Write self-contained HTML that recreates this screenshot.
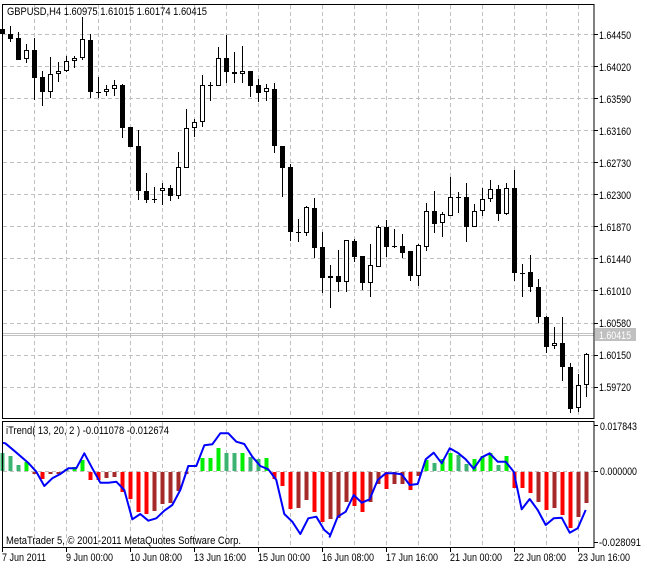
<!DOCTYPE html>
<html><head><meta charset="utf-8"><style>
html,body{margin:0;padding:0;background:#fff;}
svg{display:block;font-family:"Liberation Sans",sans-serif;font-size:11px;}
</style></head><body>
<svg id="s" width="647" height="569" xmlns="http://www.w3.org/2000/svg">
<rect x="0" y="0" width="647" height="569" fill="#fff"/>
<g id="grid" stroke="#c0c0c0" stroke-width="1" stroke-dasharray="4,3"></g>
<line x1="2" y1="333.5" x2="594" y2="333.5" stroke="#c0c0c0"/>
<line x1="2" y1="335.5" x2="594" y2="335.5" stroke="#c0c0c0"/>
<g id="hist"></g>
<g id="candles"></g>
<polyline id="blue" fill="none" stroke="#0000ff" stroke-width="2" stroke-linejoin="round"/>
<rect x="2.5" y="4.5" width="591.5" height="414" fill="none" stroke="#000"/>
<rect x="2.5" y="421.5" width="591.5" height="126" fill="none" stroke="#000"/>
<g id="ticks" stroke="#000"></g>
<g lengthAdjust="spacingAndGlyphs">
<text x="7" y="15" textLength="200" lengthAdjust="spacingAndGlyphs">GBPUSD,H4  1.60975 1.61015 1.60174 1.60415</text>
<text x="6" y="434" textLength="163" lengthAdjust="spacingAndGlyphs">iTrend( 13, 20, 2 ) -0.011078 -0.012674</text>
<text x="6" y="544" textLength="235" lengthAdjust="spacingAndGlyphs">MetaTrader 5, © 2001-2011 MetaQuotes Software Corp.</text>
</g>
<g fill="#000" id="plabels">
<text x="599" y="39" textLength="32" lengthAdjust="spacingAndGlyphs">1.64450</text>
<text x="599" y="71" textLength="32" lengthAdjust="spacingAndGlyphs">1.64020</text>
<text x="599" y="103" textLength="32" lengthAdjust="spacingAndGlyphs">1.63590</text>
<text x="599" y="135" textLength="32" lengthAdjust="spacingAndGlyphs">1.63160</text>
<text x="599" y="167" textLength="32" lengthAdjust="spacingAndGlyphs">1.62730</text>
<text x="599" y="199" textLength="32" lengthAdjust="spacingAndGlyphs">1.62300</text>
<text x="599" y="231" textLength="32" lengthAdjust="spacingAndGlyphs">1.61870</text>
<text x="599" y="263" textLength="32" lengthAdjust="spacingAndGlyphs">1.61440</text>
<text x="599" y="295" textLength="32" lengthAdjust="spacingAndGlyphs">1.61010</text>
<text x="599" y="327" textLength="32" lengthAdjust="spacingAndGlyphs">1.60580</text>
<text x="599" y="359" textLength="32" lengthAdjust="spacingAndGlyphs">1.60150</text>
<text x="599" y="391" textLength="32" lengthAdjust="spacingAndGlyphs">1.59720</text>
<text x="600" y="430" textLength="37" lengthAdjust="spacingAndGlyphs">0.017843</text>
<text x="600" y="475" textLength="37" lengthAdjust="spacingAndGlyphs">0.000000</text>
<text x="599" y="546" textLength="42" lengthAdjust="spacingAndGlyphs">-0.028091</text>
</g>
<rect x="595" y="328" width="41" height="13" fill="#c0c0c0"/>
<text x="599" y="339" fill="#fff" textLength="32" lengthAdjust="spacingAndGlyphs">1.60415</text>
<g fill="#000">
<text x="2" y="561" textLength="44" lengthAdjust="spacingAndGlyphs">7 Jun 2011</text>
<text x="66" y="561" textLength="47" lengthAdjust="spacingAndGlyphs">9 Jun 00:00</text>
<text x="130" y="561" textLength="52" lengthAdjust="spacingAndGlyphs">10 Jun 08:00</text>
<text x="194" y="561" textLength="52" lengthAdjust="spacingAndGlyphs">13 Jun 16:00</text>
<text x="258" y="561" textLength="52" lengthAdjust="spacingAndGlyphs">15 Jun 00:00</text>
<text x="322" y="561" textLength="52" lengthAdjust="spacingAndGlyphs">16 Jun 08:00</text>
<text x="386" y="561" textLength="52" lengthAdjust="spacingAndGlyphs">17 Jun 16:00</text>
<text x="450" y="561" textLength="52" lengthAdjust="spacingAndGlyphs">21 Jun 00:00</text>
<text x="514" y="561" textLength="52" lengthAdjust="spacingAndGlyphs">22 Jun 08:00</text>
<text x="578" y="561" textLength="52" lengthAdjust="spacingAndGlyphs">23 Jun 16:00</text>
</g>
</svg>
<script>
var NS="http://www.w3.org/2000/svg";
function el(p,t,a){var e=document.createElementNS(NS,t);for(var k in a)e.setAttribute(k,a[k]);p.appendChild(e);return e;}
var grid=document.getElementById('grid'),ticks=document.getElementById('ticks');
var hy=[34.5,66.5,98.5,130.5,162.5,194.5,226.5,258.5,290.5,323.5,355.5,387.5];
hy.forEach(function(y){el(grid,'line',{x1:3,y1:y,x2:594,y2:y});el(ticks,'line',{x1:594,y1:y,x2:598,y2:y});});
for(var x=34.5;x<594;x+=32){el(grid,'line',{x1:x,y1:5,x2:x,y2:418});el(grid,'line',{x1:x,y1:422,x2:x,y2:547});}
el(grid,'line',{x1:3,y1:471.5,x2:594,y2:471.5});
[425.5,471.5,542.5].forEach(function(y){el(ticks,'line',{x1:594,y1:y,x2:598,y2:y});});
for(var x=2.5;x<594;x+=64){el(ticks,'line',{x1:x,y1:548,x2:x,y2:552});}
var C=[
['b',29,34,26,36],['b',34,39,26,42],['b',38,60,32,60],['w',50,59,44,63],['b',50,78,38,100],['b',77,92,71,106],['w',74,92,57,98],['w',71,74,62,82],['w',61,71,56,72],['w',58,61,56,68],
['w',39,58,17,60],['b',40,92,34,98],['d',92,93,77,98],['w',89,92,85,96],['w',85,89,80,96],['b',85,128,84,138],['b',127,147,127,147],['b',146,191,130,200],['b',191,200,173,203],['d',199,200,187,203],
['w',188,191,183,205],['b',188,196,185,201],['w',167,196,152,199],['w',128,168,109,168],['w',122,128,119,137],['w',85,122,75,127],['d',85,86,82,101],['w',58,86,47,86],['b',58,72,35,83],['b',72,74,52,83],
['w',71,74,46,83],['b',71,86,71,97],['b',85,93,79,102],['w',88,92,84,101],['b',89,146,83,153],['b',146,168,146,197],['b',167,232,164,241],['d',232,233,219,242],['w',207,233,206,236],['b',208,248,198,258],
['b',247,278,232,293],['w',276,278,265,308],['b',276,282,250,292],['w',240,282,240,292],['b',241,257,239,262],['b',256,283,256,290],['w',265,283,244,297],['w',227,267,225,267],['b',227,247,220,257],['d',246,247,229,248],
['b',246,253,234,258],['b',251,276,251,281],['w',245,276,244,286],['w',211,247,203,251],['b',211,224,191,233],['w',214,223,212,237],['w',197,216,177,216],['d',197,198,192,213],['b',197,227,183,242],['w',211,227,204,227],
['w',199,211,188,216],['w',189,199,180,202],['b',189,214,185,221],['w',188,214,183,215],['b',188,273,170,281],['d',273,274,264,297],['b',272,287,255,292],['b',287,317,279,323],['b',317,347,316,353],['w',343,346,327,349],
['b',343,367,317,381],['b',367,409,363,413],['w',385,408,374,412],['w',354,385,353,397]];
var cg=document.getElementById('candles');
C.forEach(function(c,i){var cx=2.5+8*i;
 el(cg,'line',{x1:cx,y1:c[3],x2:cx,y2:c[4],stroke:'#000'});
 if(c[0]=='b'){el(cg,'rect',{x:cx-2.5,y:c[1],width:5,height:Math.max(1,c[2]-c[1]),fill:'#000'});}
 else if(c[0]=='w'){el(cg,'rect',{x:cx-2,y:c[1]+0.5,width:4,height:Math.max(1,c[2]-c[1]-1),fill:'#fff',stroke:'#000'});}
 else {el(cg,'line',{x1:cx-2.5,y1:c[1]+0.5,x2:cx+2.5,y2:c[1]+0.5,stroke:'#000'});}
});
var G='#00ee00',S='#3cb371',R='#ff0000',B='#a52a2a';
var H=[[S,453],[S,456],[S,465],[G,462],[B,473],[R,478],[B,473],[B,473],[S,469],[G,467],
[G,460],[R,479],[R,479],[B,477],[B,476],[R,491],[R,498],[R,511],[R,513],[B,510],
[B,503],[B,502],[B,490],[B,473],[S,471],[G,458],[G,458],[G,448],[S,453],[S,453],
[G,453],[S,457],[S,459],[G,458],[R,478],[R,485],[R,508],[B,507],[B,499],[R,511],
[R,521],[B,518],[B,517],[B,501],[R,505],[R,511],[B,501],[B,483],[R,488],[B,483],
[B,483],[R,489],[B,475],[G,460],[S,463],[G,459],[G,453],[S,455],[S,464],[G,459],
[G,456],[G,453],[S,465],[G,456],[R,487],[R,487],[R,492],[B,501],[R,509],[B,507],
[R,514],[R,527],[B,516],[B,502]];
var hg=document.getElementById('hist');
H.forEach(function(h,i){var cx=2.5+8*i;var y0=471,y=h[1];
 if(y<y0)el(hg,'rect',{x:cx-2,y:y,width:4,height:y0-y,fill:h[0]});
 else if(y>y0)el(hg,'rect',{x:cx-2,y:y0+1,width:4,height:y-y0,fill:h[0]});});
var P1=[[0,98],[10,100],[40,125],[80,160],[103,185],[127,228],[151,205],[175,192],[199,175],[223,175],[247,130],[271,175],[295,218],[319,218],[343,215],[367,240],[391,328],[415,312],[439,332],[463,325],[487,302],[511,285],[535,240],[559,168],[583,168],[607,106],[631,103],[655,70],[679,70],[703,95],[727,102],[751,140],[775,168],[799,178],[823,210],[847,312],[871,335],[895,372],[919,325],[943,320],[967,360],[985,375]];
var P2=[[29,380],[53,320],[77,305],[101,255],[125,278],[149,268],[173,210],[197,190],[221,190],[245,193],[269,225],[293,222],[317,148],[341,128],[365,160],[389,115],[413,128],[437,148],[461,176],[485,142],[509,130],[533,155],[557,155],[581,185],[605,298],[629,267],[653,300],[677,345],[701,325],[725,323],[749,368],[773,355],[797,300]];
var pts=[];P1.forEach(function(p){pts.push((p[0]/3+2).toFixed(1)+','+(410+p[1]/3).toFixed(1));});
P2.forEach(function(p){pts.push((320+p[0]/3).toFixed(1)+','+(410+p[1]/3).toFixed(1));});
document.getElementById('blue').setAttribute('points',pts.join(' '));
</script>
</body></html>
